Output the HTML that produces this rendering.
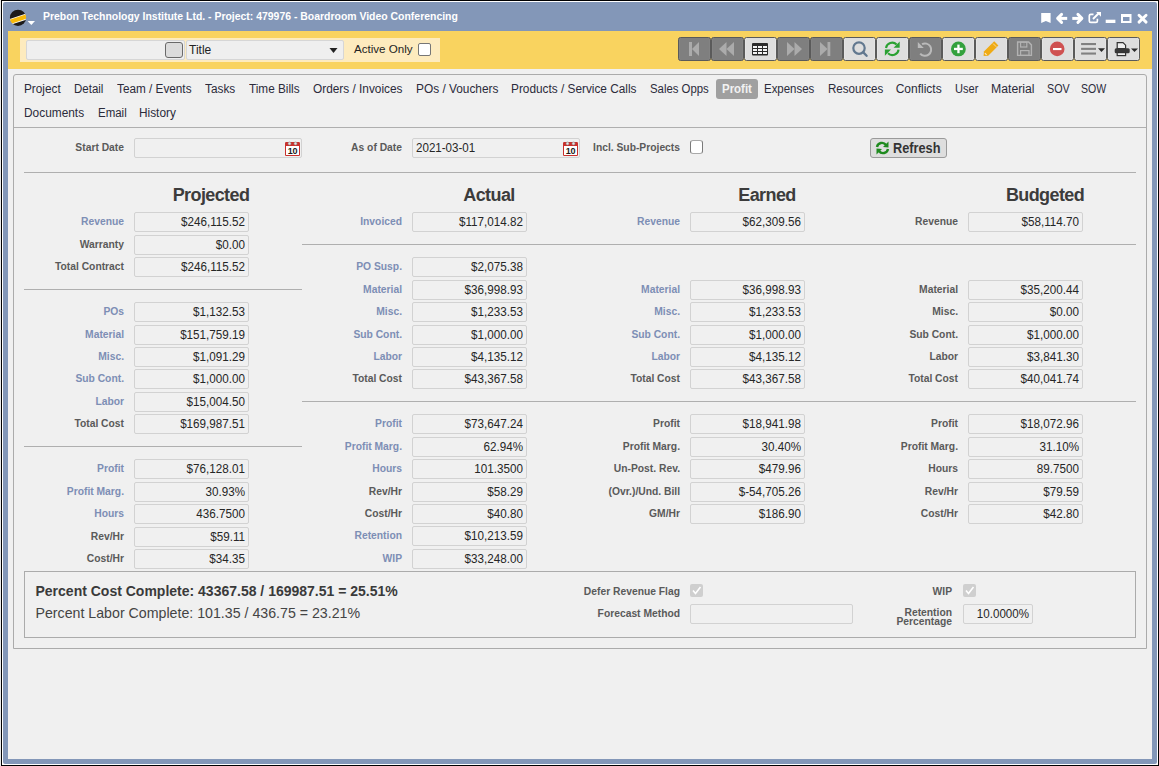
<!DOCTYPE html><html><head><meta charset="utf-8"><title>Profit</title><style>
*{box-sizing:border-box;margin:0;padding:0}
html,body{width:1159px;height:766px;overflow:hidden;background:#e9e9e9;font-family:"Liberation Sans",sans-serif}
.a{position:absolute}
.t{position:absolute;white-space:nowrap}
#win{position:absolute;left:1px;top:0;width:1158px;height:766px;border:1px solid #000;background:#fff}
#blue{position:absolute;left:3px;top:2px;width:1154px;height:762px;background:#8397b8;border-radius:2px}
#tb{position:absolute;left:8px;top:31px;width:1144px;height:38px;background:#f9d35f}
#content{position:absolute;left:8px;top:69px;width:1144px;height:690px;background:#f0f0f0}
.btn{position:absolute;top:37px;width:33px;height:24px;border:1px solid #5a5a5a;border-radius:2.5px;background:#dedede;box-shadow:inset 1px 0 0 #e4e4e4,inset -1px 0 0 #e4e4e4}
.btn.d{box-shadow:inset 1px 0 0 #838383,inset -1px 0 0 #838383}
.btn.d{background:#7f7f7f}
.btn svg{position:absolute;left:0;top:0}
.lbl{position:absolute;width:140px;text-align:right;font-weight:bold;font-size:10.3px;line-height:20px;color:#5a5a5a;white-space:nowrap}
.lbl.b{color:#7d8eb5}
.fld{position:absolute;width:115px;height:20px;border:1px solid #d2d2d2;border-radius:2px;background:#f0f0f0}
.val{position:absolute;width:111px;text-align:right;font-size:12px;line-height:20px;color:#262626;white-space:nowrap;transform:scaleX(0.972);transform-origin:100% 0}
.hd{position:absolute;width:200px;text-align:center;font-weight:bold;font-size:18px;letter-spacing:-0.6px;line-height:20px;color:#3c3c3c;white-space:nowrap}
.sep{position:absolute;height:1px;background:#afafaf}
.tab{position:absolute;top:80px;font-size:12px;line-height:18px;color:#2b2b3b;white-space:nowrap}
.tab2{top:104px}
</style></head><body>
<div id="win"></div><div id="blue"></div><div id="tb"></div><div id="content"></div>
<svg class="a" style="left:9px;top:9px" width="28" height="18" viewBox="0 0 28 18">
<defs><clipPath id="lc"><circle cx="9" cy="8.8" r="8.1"/></clipPath></defs>
<g clip-path="url(#lc)"><rect x="0" y="0" width="18" height="18" fill="#1d1b1b"/>
<polygon points="0,10.3 18,4.3 18,10.4 0,16.3" fill="#fff"/>
<polygon points="0,11.0 18,5.1 18,9.6 0,15.5" fill="#f6b90c"/></g>
<polygon points="18.6,12 26,12 22.3,16" fill="#fff"/>
</svg>
<div class="t" style="left:43px;top:10px;font-weight:bold;font-size:10.45px;line-height:14px;color:#fff">Prebon Technology Institute Ltd. - Project: 479976 - Boardroom Video Conferencing</div>
<svg class="a" style="left:1038px;top:9px" width="112" height="18" viewBox="0 0 112 18">
<path d="M3.2 4 H12.6 V13.9 L7.9 11.9 L3.2 13.9 Z" fill="#fff"/>
<polyline points="23.6,5.4 19.6,9.4 23.6,13.4" stroke="#fff" stroke-width="2.9" fill="none" stroke-linecap="round" stroke-linejoin="round"/>
<rect x="20" y="7.9" width="9.2" height="3" fill="#fff"/>
<polyline points="39.9,5.4 43.9,9.4 39.9,13.4" stroke="#fff" stroke-width="2.9" fill="none" stroke-linecap="round" stroke-linejoin="round"/>
<rect x="34.3" y="7.9" width="9.2" height="3" fill="#fff"/>
<path d="M55.5 5.3 H52.8 A1.5 1.5 0 0 0 51.3 6.8 V11.9 A1.5 1.5 0 0 0 52.8 13.4 H57.9 A1.5 1.5 0 0 0 59.4 11.9 V9.8" stroke="#fff" stroke-width="1.7" fill="none"/>
<path d="M55 10 L61 4" stroke="#fff" stroke-width="1.9" fill="none"/><polygon points="58.2,3 63,3 63,7.8" fill="#fff"/>
<rect x="67.7" y="10.7" width="9.7" height="3.3" fill="#fff"/>
<path d="M83 4.9 H93.5 V14 H83 Z M85 7.9 V12 H91.5 V7.9 Z" fill="#fff" fill-rule="evenodd"/>
<path d="M101 6.2 L108.1 13.1 M108.1 6.2 L101 13.1" stroke="#fff" stroke-width="2.9" stroke-linecap="round"/>
</svg>
<div class="a" style="left:20px;top:38px;width:420px;height:24px;background:#fdebbe"></div>
<div class="a" style="left:26px;top:40px;width:159px;height:20px;background:#efefef;border:1px solid #d6d6d6;border-radius:2px"></div>
<div class="a" style="left:165px;top:42px;width:18px;height:16px;background:#dcdcdc;border:1px solid #6a6a6a;border-radius:3px"></div>
<div class="a" style="left:186px;top:40px;width:158px;height:20px;background:#efefef;border:1px solid #d6d6d6;border-radius:2px"></div>
<div class="t" style="left:189px;top:41px;font-size:12px;line-height:18px;color:#222">Title</div>
<svg class="a" style="left:329px;top:47px" width="9" height="7"><polygon points="0.5,1 8.5,1 4.5,6" fill="#222"/></svg>
<div class="t" style="left:354px;top:40px;font-size:11.6px;line-height:18px;color:#222">Active Only</div>
<div class="a" style="left:418px;top:43px;width:13px;height:13px;background:#fff;border:1px solid #767676;border-radius:2px"></div>
<div class="btn d" style="left:678px"><svg width="31" height="22" viewBox="1 1 31 22"><rect x="11" y="5" width="3" height="14" fill="#ababab"/><polygon points="14,12 21,5 21,19" fill="#ababab"/></svg></div>
<div class="btn d" style="left:711px"><svg width="31" height="22" viewBox="1 1 31 22"><polygon points="8,12 15.5,5 15.5,19" fill="#ababab"/><polygon points="15.5,12 23,5 23,19" fill="#ababab"/></svg></div>
<div class="btn" style="left:744px"><svg width="31" height="22" viewBox="1 1 31 22"><rect x="8" y="6" width="16" height="12.5" rx="1" fill="#2b2b2b"/><g fill="#f4f4f4"><rect x="9" y="9" width="4" height="2"/><rect x="14" y="9" width="4" height="2"/><rect x="19" y="9" width="4" height="2"/><rect x="9" y="12" width="4" height="2"/><rect x="14" y="12" width="4" height="2"/><rect x="19" y="12" width="4" height="2"/><rect x="9" y="15" width="4" height="2"/><rect x="14" y="15" width="4" height="2"/><rect x="19" y="15" width="4" height="2"/></g></svg></div>
<div class="btn d" style="left:777px"><svg width="31" height="22" viewBox="1 1 31 22"><polygon points="10,5 17.5,12 10,19" fill="#ababab"/><polygon points="17.5,5 25,12 17.5,19" fill="#ababab"/></svg></div>
<div class="btn d" style="left:810px"><svg width="31" height="22" viewBox="1 1 31 22"><polygon points="10,5 17.5,12 10,19" fill="#ababab"/><rect x="17.5" y="5" width="2.8" height="14" fill="#ababab"/></svg></div>
<div class="btn" style="left:843px"><svg width="31" height="22" viewBox="1 1 31 22"><circle cx="16" cy="11.1" r="5.7" stroke="#62788f" stroke-width="2.2" fill="none"/><path d="M20.3 15.4 L23.6 18.8" stroke="#62788f" stroke-width="2.3" stroke-linecap="round"/></svg></div>
<div class="btn" style="left:876px"><svg width="31" height="22" viewBox="1 1 31 22"><path d="M10 11 A6.3 6.3 0 0 1 20.6 7.4" stroke="#2aa132" stroke-width="2.1" fill="none"/><polygon points="23.7,4.6 23.7,10.7 17.6,10.7" fill="#2aa132"/><path d="M22.6 12.6 A6.3 6.3 0 0 1 12 16.3" stroke="#2aa132" stroke-width="2.1" fill="none"/><polygon points="8.9,18.8 8.9,12.6 15,12.6" fill="#2aa132"/></svg></div>
<div class="btn d" style="left:909px"><svg width="31" height="22" viewBox="1 1 31 22"><path d="M13 7.2 A6.2 6.2 0 1 1 11.2 16.6" stroke="#bababa" stroke-width="2" fill="none"/><polygon points="8.8,4.9 8.8,10.9 14.8,10.9" fill="#bababa"/></svg></div>
<div class="btn" style="left:942px"><svg width="31" height="22" viewBox="1 1 31 22"><circle cx="16.4" cy="11.9" r="7.4" fill="#33a13d"/><rect x="15.3" y="7.6" width="2.3" height="8.6" fill="#fff"/><rect x="12" y="10.8" width="8.8" height="2.3" fill="#fff"/></svg></div>
<div class="btn" style="left:975px"><svg width="31" height="22" viewBox="1 1 31 22"><polygon points="8.6,19.1 8.95,14.5 19.2,4.3 23.4,8.5 13.2,18.75" fill="#efab14"/><path d="M18.1 6.6 L21.3 9.8" stroke="#f6dcb0" stroke-width="0.9"/><path d="M9.9 16.2 L11.6 17.9" stroke="#fbe9c8" stroke-width="1.2"/></svg></div>
<div class="btn d" style="left:1008px"><svg width="31" height="22" viewBox="1 1 31 22"><path d="M9.6 5 H20.6 L23.4 7.9 V18.4 H9.6 Z" stroke="#b2b2b2" stroke-width="1.4" fill="none"/><rect x="12.6" y="5.2" width="6.2" height="4.8" stroke="#b2b2b2" stroke-width="1.2" fill="none"/><rect x="15.3" y="6" width="1.6" height="3" fill="#8a8a8a"/><rect x="12.6" y="13.6" width="8.4" height="4.8" stroke="#b2b2b2" stroke-width="1.2" fill="none"/></svg></div>
<div class="btn" style="left:1041px"><svg width="31" height="22" viewBox="1 1 31 22"><circle cx="16.2" cy="11.9" r="7.3" fill="#cf5151"/><rect x="12" y="11" width="8.5" height="2.1" fill="#fff"/></svg></div>
<div class="btn" style="left:1074px"><svg width="31" height="22" viewBox="1 1 31 22"><rect x="7.1" y="6" width="14.9" height="2.1" fill="#808080"/><rect x="7.1" y="10.8" width="14.9" height="2.1" fill="#808080"/><rect x="7.1" y="15.5" width="14.9" height="2.1" fill="#808080"/><polygon points="24,11.2 31,11.2 27.5,15" fill="#2b2b2b"/></svg></div>
<div class="btn" style="left:1107px"><svg width="31" height="22" viewBox="1 1 31 22"><path d="M10.2 5.6 H16 L18.6 8.2 V11.5 H10.2 Z" fill="#efefef" stroke="#333" stroke-width="1.2"/><rect x="7.7" y="11.2" width="15" height="5" rx="1.5" fill="#383838"/><rect x="10.2" y="15.6" width="8.4" height="3" fill="#efefef" stroke="#333" stroke-width="1.2"/><polygon points="24,11.5 31,11.5 27.5,15" fill="#2b2b2b"/></svg></div>
<div class="a" style="left:13px;top:74px;width:1134px;height:575px;border:1px solid #ababab;border-radius:3px 3px 0 0"></div>
<div class="sep" style="left:14px;top:127px;width:1132px"></div>
<div class="tab" style="left:24px;transform:scaleX(0.982);transform-origin:0 0">Project</div>
<div class="tab" style="left:74.3px;transform:scaleX(0.958);transform-origin:0 0">Detail</div>
<div class="tab" style="left:116.5px;transform:scaleX(0.98);transform-origin:0 0">Team / Events</div>
<div class="tab" style="left:205px;transform:scaleX(0.984);transform-origin:0 0">Tasks</div>
<div class="tab" style="left:248.9px;transform:scaleX(0.98);transform-origin:0 0">Time Bills</div>
<div class="tab" style="left:312.9px;transform:scaleX(0.986);transform-origin:0 0">Orders / Invoices</div>
<div class="tab" style="left:415.6px;transform:scaleX(0.989);transform-origin:0 0">POs / Vouchers</div>
<div class="tab" style="left:510.9px;transform:scaleX(0.985);transform-origin:0 0">Products / Service Calls</div>
<div class="tab" style="left:650.2px;transform:scaleX(0.948);transform-origin:0 0">Sales Opps</div>
<div class="tab" style="left:763.7px;transform:scaleX(0.955);transform-origin:0 0">Expenses</div>
<div class="tab" style="left:827.7px;transform:scaleX(0.965);transform-origin:0 0">Resources</div>
<div class="tab" style="left:895.7px;transform:scaleX(1.0);transform-origin:0 0">Conflicts</div>
<div class="tab" style="left:955px;transform:scaleX(0.923);transform-origin:0 0">User</div>
<div class="tab" style="left:991.4px;transform:scaleX(1.02);transform-origin:0 0">Material</div>
<div class="tab" style="left:1046.6px;transform:scaleX(0.896);transform-origin:0 0">SOV</div>
<div class="tab" style="left:1081.4px;transform:scaleX(0.879);transform-origin:0 0">SOW</div>
<div class="tab tab2" style="left:24.1px;transform:scaleX(0.99);transform-origin:0 0">Documents</div>
<div class="tab tab2" style="left:97.6px;transform:scaleX(0.957);transform-origin:0 0">Email</div>
<div class="tab tab2" style="left:139.3px;transform:scaleX(0.987);transform-origin:0 0">History</div>
<div class="a" style="left:716px;top:79px;width:42px;height:20px;background:#a0a0a0;border-radius:3px"></div>
<div class="t" style="left:722px;top:80px;font-size:12px;line-height:18px;font-weight:bold;color:#f2f2f2;transform:scaleX(0.955);transform-origin:0 0">Profit</div>
<div class="lbl" style="left:-16px;top:138px">Start Date</div>
<div class="fld" style="left:134px;top:138px;width:168px"></div>
<svg class="a" style="left:285px;top:141px" width="16" height="16" viewBox="0 0 16 16">
<rect x="0" y="1" width="15" height="14" rx="1.2" fill="#c9302c"/><rect x="1" y="5" width="13" height="9" fill="#fff"/>
<circle cx="4.5" cy="2.5" r="1.5" fill="#e6e6e6" stroke="#8a8a8a" stroke-width="0.6"/><circle cx="10.5" cy="2.5" r="1.5" fill="#e6e6e6" stroke="#8a8a8a" stroke-width="0.6"/>
<text x="7.5" y="13.3" text-anchor="middle" font-family="Liberation Sans" font-weight="bold" font-size="9" letter-spacing="-0.3" fill="#1a1a1a">10</text></svg>
<div class="lbl" style="left:262px;top:138px">As of Date</div>
<div class="fld" style="left:412px;top:138px;width:168px"></div>
<div class="t" style="left:416px;top:138px;font-size:12px;line-height:20px;color:#262626;transform:scaleX(0.965);transform-origin:0 0">2021-03-01</div>
<svg class="a" style="left:563px;top:141px" width="16" height="16" viewBox="0 0 16 16">
<rect x="0" y="1" width="15" height="14" rx="1.2" fill="#c9302c"/><rect x="1" y="5" width="13" height="9" fill="#fff"/>
<circle cx="4.5" cy="2.5" r="1.5" fill="#e6e6e6" stroke="#8a8a8a" stroke-width="0.6"/><circle cx="10.5" cy="2.5" r="1.5" fill="#e6e6e6" stroke="#8a8a8a" stroke-width="0.6"/>
<text x="7.5" y="13.3" text-anchor="middle" font-family="Liberation Sans" font-weight="bold" font-size="9" letter-spacing="-0.3" fill="#1a1a1a">10</text></svg>
<div class="lbl" style="left:540px;top:138px">Incl. Sub-Projects</div>
<div class="a" style="left:690px;top:140px;width:13px;height:14px;background:#fff;border:1px solid #7a7a7a;border-top-color:#a9a9a9;border-bottom-color:#a9a9a9;border-radius:3px"></div>
<div class="a" style="left:870px;top:138px;width:77px;height:20px;background:#dedede;border:1px solid #9a9a9a;border-radius:3px"></div>
<svg class="a" style="left:875px;top:141px" width="15" height="14" viewBox="0 0 15 14">
<path d="M2 6 A5 5 0 0 1 11 4" stroke="#1e8a1e" stroke-width="2.4" fill="none"/><polygon points="13.5,0.5 13.5,6.5 8,6" fill="#1e8a1e"/>
<path d="M13 8 A5 5 0 0 1 4 10" stroke="#1e8a1e" stroke-width="2.4" fill="none"/><polygon points="1.5,13.5 1.5,7.5 7,8" fill="#1e8a1e"/></svg>
<div class="t" style="left:892.5px;top:138px;font-size:14px;line-height:20px;font-weight:bold;color:#333;transform:scaleX(0.91);transform-origin:0 0">Refresh</div>
<div class="sep" style="left:24px;top:172px;width:1112px"></div>
<div class="sep" style="left:302px;top:244px;width:834px"></div>
<div class="sep" style="left:24px;top:289px;width:278px"></div>
<div class="sep" style="left:302px;top:401px;width:834px"></div>
<div class="sep" style="left:24px;top:446px;width:278px"></div>
<div class="hd" style="left:111px;top:185px">Projected</div>
<div class="lbl b" style="left:-16px;top:212px">Revenue</div>
<div class="fld" style="left:134px;top:212px"></div>
<div class="val" style="left:134px;top:212px">$246,115.52</div>
<div class="lbl" style="left:-16px;top:235px">Warranty</div>
<div class="fld" style="left:134px;top:235px"></div>
<div class="val" style="left:134px;top:235px">$0.00</div>
<div class="lbl" style="left:-16px;top:257px">Total Contract</div>
<div class="fld" style="left:134px;top:257px"></div>
<div class="val" style="left:134px;top:257px">$246,115.52</div>
<div class="lbl b" style="left:-16px;top:302px">POs</div>
<div class="fld" style="left:134px;top:302px"></div>
<div class="val" style="left:134px;top:302px">$1,132.53</div>
<div class="lbl b" style="left:-16px;top:325px">Material</div>
<div class="fld" style="left:134px;top:325px"></div>
<div class="val" style="left:134px;top:325px">$151,759.19</div>
<div class="lbl b" style="left:-16px;top:347px">Misc.</div>
<div class="fld" style="left:134px;top:347px"></div>
<div class="val" style="left:134px;top:347px">$1,091.29</div>
<div class="lbl b" style="left:-16px;top:369px">Sub Cont.</div>
<div class="fld" style="left:134px;top:369px"></div>
<div class="val" style="left:134px;top:369px">$1,000.00</div>
<div class="lbl b" style="left:-16px;top:392px">Labor</div>
<div class="fld" style="left:134px;top:392px"></div>
<div class="val" style="left:134px;top:392px">$15,004.50</div>
<div class="lbl" style="left:-16px;top:414px">Total Cost</div>
<div class="fld" style="left:134px;top:414px"></div>
<div class="val" style="left:134px;top:414px">$169,987.51</div>
<div class="lbl b" style="left:-16px;top:459px">Profit</div>
<div class="fld" style="left:134px;top:459px"></div>
<div class="val" style="left:134px;top:459px">$76,128.01</div>
<div class="lbl b" style="left:-16px;top:482px">Profit Marg.</div>
<div class="fld" style="left:134px;top:482px"></div>
<div class="val" style="left:134px;top:482px">30.93%</div>
<div class="lbl b" style="left:-16px;top:504px">Hours</div>
<div class="fld" style="left:134px;top:504px"></div>
<div class="val" style="left:134px;top:504px">436.7500</div>
<div class="lbl" style="left:-16px;top:527px">Rev/Hr</div>
<div class="fld" style="left:134px;top:527px"></div>
<div class="val" style="left:134px;top:527px">$59.11</div>
<div class="lbl" style="left:-16px;top:549px">Cost/Hr</div>
<div class="fld" style="left:134px;top:549px"></div>
<div class="val" style="left:134px;top:549px">$34.35</div>
<div class="hd" style="left:389px;top:185px">Actual</div>
<div class="lbl b" style="left:262px;top:212px">Invoiced</div>
<div class="fld" style="left:412px;top:212px"></div>
<div class="val" style="left:412px;top:212px">$117,014.82</div>
<div class="lbl b" style="left:262px;top:257px">PO Susp.</div>
<div class="fld" style="left:412px;top:257px"></div>
<div class="val" style="left:412px;top:257px">$2,075.38</div>
<div class="lbl b" style="left:262px;top:280px">Material</div>
<div class="fld" style="left:412px;top:280px"></div>
<div class="val" style="left:412px;top:280px">$36,998.93</div>
<div class="lbl b" style="left:262px;top:302px">Misc.</div>
<div class="fld" style="left:412px;top:302px"></div>
<div class="val" style="left:412px;top:302px">$1,233.53</div>
<div class="lbl b" style="left:262px;top:325px">Sub Cont.</div>
<div class="fld" style="left:412px;top:325px"></div>
<div class="val" style="left:412px;top:325px">$1,000.00</div>
<div class="lbl b" style="left:262px;top:347px">Labor</div>
<div class="fld" style="left:412px;top:347px"></div>
<div class="val" style="left:412px;top:347px">$4,135.12</div>
<div class="lbl" style="left:262px;top:369px">Total Cost</div>
<div class="fld" style="left:412px;top:369px"></div>
<div class="val" style="left:412px;top:369px">$43,367.58</div>
<div class="lbl b" style="left:262px;top:414px">Profit</div>
<div class="fld" style="left:412px;top:414px"></div>
<div class="val" style="left:412px;top:414px">$73,647.24</div>
<div class="lbl b" style="left:262px;top:437px">Profit Marg.</div>
<div class="fld" style="left:412px;top:437px"></div>
<div class="val" style="left:412px;top:437px">62.94%</div>
<div class="lbl b" style="left:262px;top:459px">Hours</div>
<div class="fld" style="left:412px;top:459px"></div>
<div class="val" style="left:412px;top:459px">101.3500</div>
<div class="lbl" style="left:262px;top:482px">Rev/Hr</div>
<div class="fld" style="left:412px;top:482px"></div>
<div class="val" style="left:412px;top:482px">$58.29</div>
<div class="lbl" style="left:262px;top:504px">Cost/Hr</div>
<div class="fld" style="left:412px;top:504px"></div>
<div class="val" style="left:412px;top:504px">$40.80</div>
<div class="lbl b" style="left:262px;top:526px">Retention</div>
<div class="fld" style="left:412px;top:526px"></div>
<div class="val" style="left:412px;top:526px">$10,213.59</div>
<div class="lbl b" style="left:262px;top:549px">WIP</div>
<div class="fld" style="left:412px;top:549px"></div>
<div class="val" style="left:412px;top:549px">$33,248.00</div>
<div class="hd" style="left:667px;top:185px">Earned</div>
<div class="lbl b" style="left:540px;top:212px">Revenue</div>
<div class="fld" style="left:690px;top:212px"></div>
<div class="val" style="left:690px;top:212px">$62,309.56</div>
<div class="lbl b" style="left:540px;top:280px">Material</div>
<div class="fld" style="left:690px;top:280px"></div>
<div class="val" style="left:690px;top:280px">$36,998.93</div>
<div class="lbl b" style="left:540px;top:302px">Misc.</div>
<div class="fld" style="left:690px;top:302px"></div>
<div class="val" style="left:690px;top:302px">$1,233.53</div>
<div class="lbl b" style="left:540px;top:325px">Sub Cont.</div>
<div class="fld" style="left:690px;top:325px"></div>
<div class="val" style="left:690px;top:325px">$1,000.00</div>
<div class="lbl b" style="left:540px;top:347px">Labor</div>
<div class="fld" style="left:690px;top:347px"></div>
<div class="val" style="left:690px;top:347px">$4,135.12</div>
<div class="lbl" style="left:540px;top:369px">Total Cost</div>
<div class="fld" style="left:690px;top:369px"></div>
<div class="val" style="left:690px;top:369px">$43,367.58</div>
<div class="lbl" style="left:540px;top:414px">Profit</div>
<div class="fld" style="left:690px;top:414px"></div>
<div class="val" style="left:690px;top:414px">$18,941.98</div>
<div class="lbl" style="left:540px;top:437px">Profit Marg.</div>
<div class="fld" style="left:690px;top:437px"></div>
<div class="val" style="left:690px;top:437px">30.40%</div>
<div class="lbl" style="left:540px;top:459px">Un-Post. Rev.</div>
<div class="fld" style="left:690px;top:459px"></div>
<div class="val" style="left:690px;top:459px">$479.96</div>
<div class="lbl" style="left:540px;top:482px">(Ovr.)/Und. Bill</div>
<div class="fld" style="left:690px;top:482px"></div>
<div class="val" style="left:690px;top:482px">$-54,705.26</div>
<div class="lbl" style="left:540px;top:504px">GM/Hr</div>
<div class="fld" style="left:690px;top:504px"></div>
<div class="val" style="left:690px;top:504px">$186.90</div>
<div class="hd" style="left:945px;top:185px">Budgeted</div>
<div class="lbl" style="left:818px;top:212px">Revenue</div>
<div class="fld" style="left:968px;top:212px"></div>
<div class="val" style="left:968px;top:212px">$58,114.70</div>
<div class="lbl" style="left:818px;top:280px">Material</div>
<div class="fld" style="left:968px;top:280px"></div>
<div class="val" style="left:968px;top:280px">$35,200.44</div>
<div class="lbl" style="left:818px;top:302px">Misc.</div>
<div class="fld" style="left:968px;top:302px"></div>
<div class="val" style="left:968px;top:302px">$0.00</div>
<div class="lbl" style="left:818px;top:325px">Sub Cont.</div>
<div class="fld" style="left:968px;top:325px"></div>
<div class="val" style="left:968px;top:325px">$1,000.00</div>
<div class="lbl" style="left:818px;top:347px">Labor</div>
<div class="fld" style="left:968px;top:347px"></div>
<div class="val" style="left:968px;top:347px">$3,841.30</div>
<div class="lbl" style="left:818px;top:369px">Total Cost</div>
<div class="fld" style="left:968px;top:369px"></div>
<div class="val" style="left:968px;top:369px">$40,041.74</div>
<div class="lbl" style="left:818px;top:414px">Profit</div>
<div class="fld" style="left:968px;top:414px"></div>
<div class="val" style="left:968px;top:414px">$18,072.96</div>
<div class="lbl" style="left:818px;top:437px">Profit Marg.</div>
<div class="fld" style="left:968px;top:437px"></div>
<div class="val" style="left:968px;top:437px">31.10%</div>
<div class="lbl" style="left:818px;top:459px">Hours</div>
<div class="fld" style="left:968px;top:459px"></div>
<div class="val" style="left:968px;top:459px">89.7500</div>
<div class="lbl" style="left:818px;top:482px">Rev/Hr</div>
<div class="fld" style="left:968px;top:482px"></div>
<div class="val" style="left:968px;top:482px">$79.59</div>
<div class="lbl" style="left:818px;top:504px">Cost/Hr</div>
<div class="fld" style="left:968px;top:504px"></div>
<div class="val" style="left:968px;top:504px">$42.80</div>
<div class="a" style="left:24px;top:571px;width:1112px;height:67px;border:1px solid #ababab"></div>
<div class="t" style="left:35.5px;top:581px;font-size:14px;line-height:20px;font-weight:bold;color:#3a3a3a">Percent Cost Complete: 43367.58 / 169987.51 = 25.51%</div>
<div class="t" style="left:35.5px;top:603px;font-size:14.2px;line-height:20px;color:#444">Percent Labor Complete: 101.35 / 436.75 = 23.21%</div>
<div class="lbl" style="left:540px;top:582px">Defer Revenue Flag</div>
<div class="a" style="left:690px;top:584px;width:13px;height:13px;background:#cfcfcf;border-radius:2px"></div>
<svg class="a" style="left:690px;top:584px" width="13" height="13"><path d="M3 6.5 L5.5 9.5 L10.5 3" stroke="#fff" stroke-width="1.6" fill="none"/></svg>
<div class="lbl" style="left:540px;top:604px">Forecast Method</div>
<div class="fld" style="left:690px;top:604px;width:163px"></div>
<div class="lbl" style="left:812px;top:582px">WIP</div>
<div class="a" style="left:963px;top:584px;width:13px;height:13px;background:#cfcfcf;border-radius:2px"></div>
<svg class="a" style="left:963px;top:584px" width="13" height="13"><path d="M3 6.5 L5.5 9.5 L10.5 3" stroke="#fff" stroke-width="1.6" fill="none"/></svg>
<div class="lbl" style="left:812px;top:608px;line-height:9px">Retention<br>Percentage</div>
<div class="fld" style="left:963px;top:604px;width:70px"></div>
<div class="val" style="left:963px;top:604px;width:66px;transform:scaleX(0.965);transform-origin:100% 0">10.0000%</div>
</body></html>
